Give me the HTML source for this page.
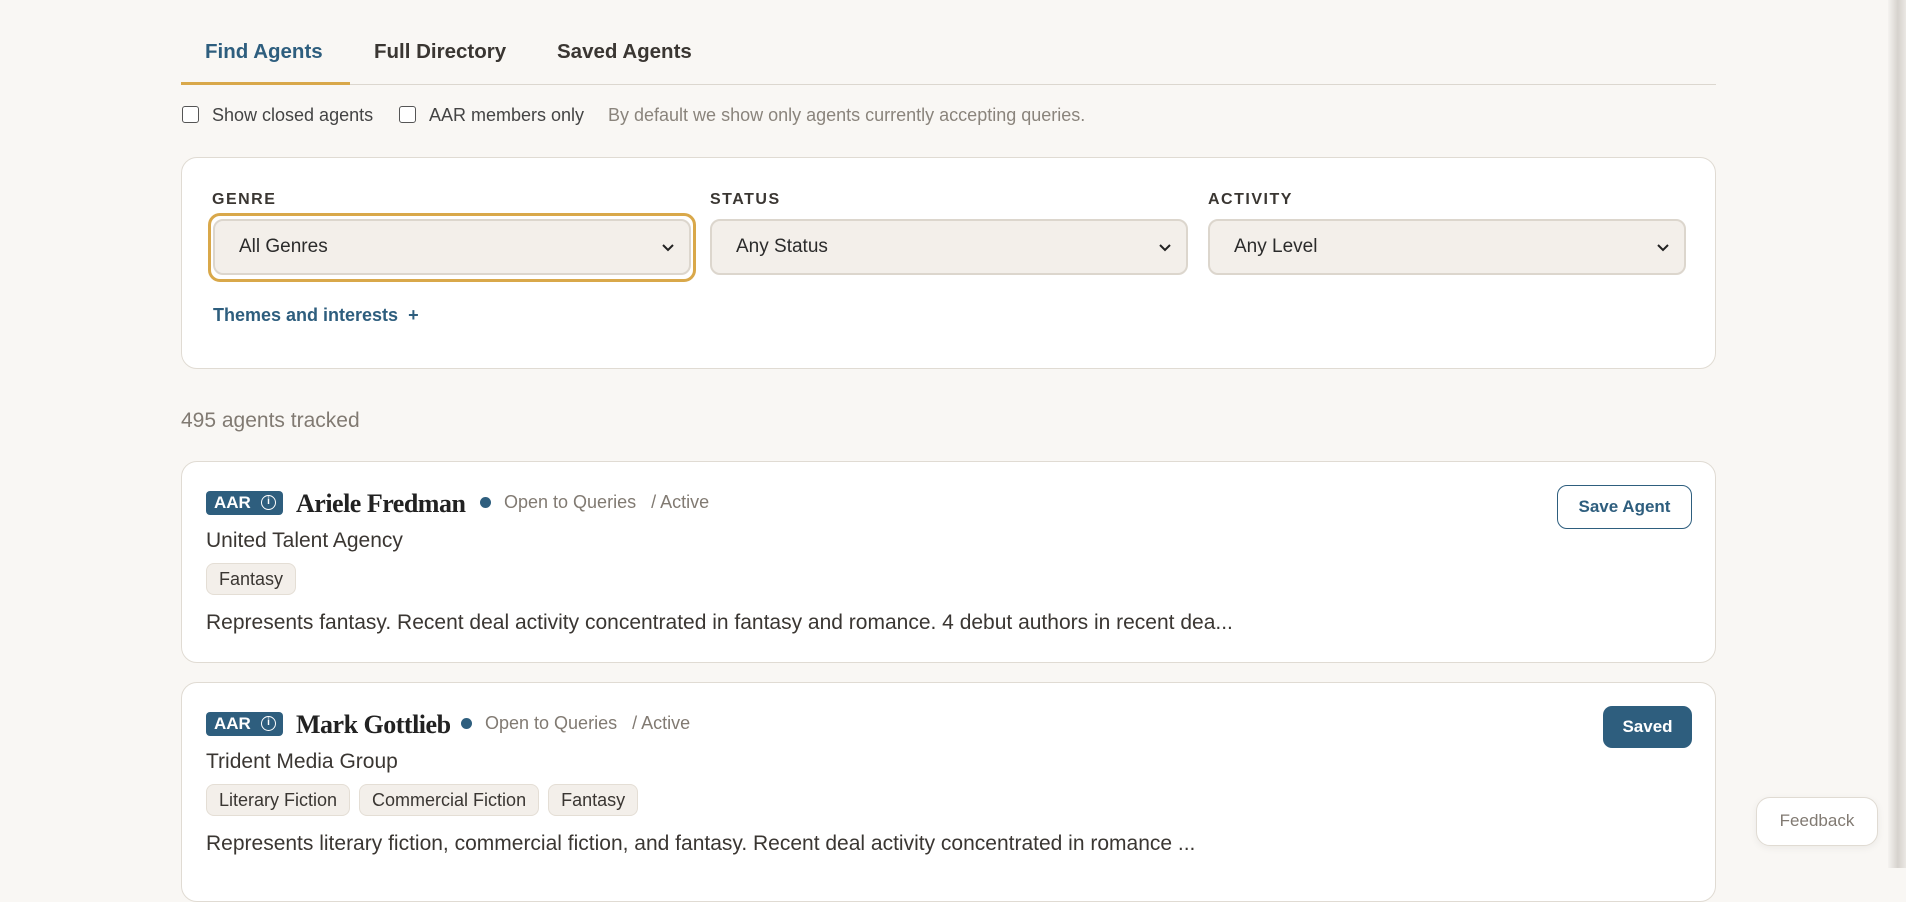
<!DOCTYPE html>
<html><head><meta charset="utf-8"><style>
*{box-sizing:border-box;margin:0;padding:0}
body{width:1906px;height:868px;overflow:hidden;background:#f9f7f4;font-family:"Liberation Sans",sans-serif;position:relative;color:#2b2b2b}
.a{position:absolute;white-space:nowrap}
.tab{font-size:20.5px;font-weight:bold;color:#3a3632;top:40px}
.cb{width:17px;height:17px;border:1.5px solid #555;border-radius:3px;background:#fff;top:106px}
.cbt{font-size:18px;color:#444;top:105px}
.card{background:#fff;border:1.5px solid #e0dbd3;border-radius:16px}
.lbl{font-size:16px;font-weight:bold;letter-spacing:1.5px;color:#3a3632;top:191px}
.sel{top:219px;height:56px;background:#f3efea;border:2px solid #dcd6cd;border-radius:10px;font-size:19px;color:#2b2b2b;padding:15px 0 0 24px}
.sel svg{position:absolute;right:14px;top:22px}
.badge{background:#2e5e7e;color:#fff;font-weight:bold;font-size:17px;border-radius:4px;height:24px;width:77px;padding:2px 0 0 8px}
.badge i{position:absolute;left:55px;top:4px;width:15px;height:15px;border:1.5px solid #fff;border-radius:50%;font-style:normal;font-size:10px;text-align:center;line-height:12px}
.name{font-family:"Liberation Serif",serif;font-weight:bold;font-size:26px;color:#222;letter-spacing:-0.5px}
.dot{width:11px;height:11px;border-radius:50%;background:#2e5e7e}
.st{font-size:18px;color:#817a72}
.ag{font-size:21px;color:#3a3632}
.tags{display:flex;gap:9px}
.tag{height:32px;background:#f3efea;border:1px solid #e4ded5;border-radius:8px;font-size:18px;color:#3a3632;padding:5px 12px 0}
.desc{font-size:21px;color:#3a3632}
</style></head><body>
<div class="a tab" style="left:205px;color:#2e5e7e">Find Agents</div>
<div class="a tab" style="left:374px">Full Directory</div>
<div class="a tab" style="left:557px">Saved Agents</div>
<div class="a" style="left:181px;top:84px;width:1535px;height:1px;background:#dcd7cf"></div>
<div class="a" style="left:181px;top:82px;width:169px;height:3px;background:#d9a84a"></div>

<div class="a cb" style="left:182px"></div><div class="a cbt" style="left:212px">Show closed agents</div>
<div class="a cb" style="left:399px"></div><div class="a cbt" style="left:429px">AAR members only</div>
<div class="a cbt" style="left:608px;color:#8a847c">By default we show only agents currently accepting queries.</div>

<div class="a card" style="left:181px;top:157px;width:1535px;height:212px"></div>
<div class="a lbl" style="left:212px">GENRE</div>
<div class="a lbl" style="left:710px">STATUS</div>
<div class="a lbl" style="left:1208px">ACTIVITY</div>
<div class="a" style="left:208px;top:213px;width:488px;height:69px;border:3px solid #d9a84a;border-radius:12px"></div>
<div class="a sel" style="left:213px;width:478px">All Genres<svg width="14" height="10" viewBox="0 0 14 10"><path d="M2 2l5 5 5-5" stroke="#222" stroke-width="2" fill="none"/></svg></div>
<div class="a sel" style="left:710px;width:478px">Any Status<svg width="14" height="10" viewBox="0 0 14 10"><path d="M2 2l5 5 5-5" stroke="#222" stroke-width="2" fill="none"/></svg></div>
<div class="a sel" style="left:1208px;width:478px">Any Level<svg width="14" height="10" viewBox="0 0 14 10"><path d="M2 2l5 5 5-5" stroke="#222" stroke-width="2" fill="none"/></svg></div>
<div class="a" style="left:213px;top:305px;font-size:18px;font-weight:bold;color:#2e5e7e">Themes and interests &nbsp;+</div>

<div class="a" style="left:181px;top:409px;font-size:21px;color:#817a72">495 agents tracked</div>

<div class="a card" style="left:181px;top:461px;width:1535px;height:202px"></div>
<div class="a badge" style="left:206px;top:491px">AAR<i>i</i></div>
<div class="a name" style="left:296px;top:489px">Ariele Fredman</div>
<div class="a dot" style="left:480px;top:497px"></div>
<div class="a st" style="left:504px;top:492px">Open to Queries &nbsp;&nbsp;/ Active</div>
<div class="a ag" style="left:206px;top:529px">United Talent Agency</div>
<div class="a tags" style="left:206px;top:563px"><div class="tag">Fantasy</div></div>
<div class="a desc" style="left:206px;top:611px">Represents fantasy. Recent deal activity concentrated in fantasy and romance. 4 debut authors in recent dea...</div>
<div class="a" style="left:1557px;top:485px;width:135px;height:44px;border:1.5px solid #2e5e7e;border-radius:10px;color:#2e5e7e;font-weight:bold;font-size:17px;text-align:center;line-height:41px">Save Agent</div>

<div class="a card" style="left:181px;top:682px;width:1535px;height:220px"></div>
<div class="a badge" style="left:206px;top:712px">AAR<i>i</i></div>
<div class="a name" style="left:296px;top:710px">Mark Gottlieb</div>
<div class="a dot" style="left:461px;top:718px"></div>
<div class="a st" style="left:485px;top:713px">Open to Queries &nbsp;&nbsp;/ Active</div>
<div class="a ag" style="left:206px;top:750px">Trident Media Group</div>
<div class="a tags" style="left:206px;top:784px"><div class="tag">Literary Fiction</div><div class="tag">Commercial Fiction</div><div class="tag">Fantasy</div></div>
<div class="a desc" style="left:206px;top:832px">Represents literary fiction, commercial fiction, and fantasy. Recent deal activity concentrated in romance ...</div>
<div class="a" style="left:1603px;top:706px;width:89px;height:42px;background:#2e5e7e;border-radius:9px;color:#fff;font-weight:bold;font-size:17px;text-align:center;line-height:42px">Saved</div>

<div class="a" style="left:1756px;top:797px;width:122px;height:49px;background:#fff;border:1.5px solid #e0dbd3;border-radius:14px;color:#817a72;font-size:17px;text-align:center;line-height:46px;box-shadow:0 2px 8px rgba(0,0,0,.06)">Feedback</div>
<div class="a" style="left:1888px;top:0;width:18px;height:868px;background:linear-gradient(90deg,#f5f3f0,#d6d2cd 55%,#ebe8e4)"></div>
</body></html>
